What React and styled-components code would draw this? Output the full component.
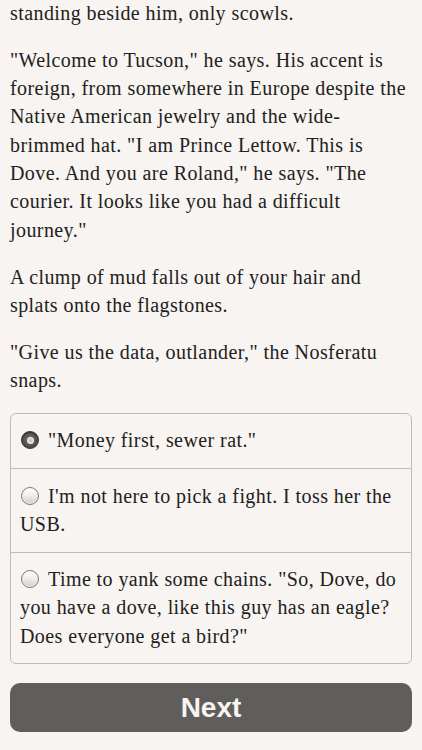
import React, { useState } from "react";
import styled, { createGlobalStyle } from "styled-components";

const GlobalStyle = createGlobalStyle`
  html, body {
    margin: 0;
    padding: 0;
    background: #f7f4f1;
  }
  * { box-sizing: border-box; }
`;

const Page = styled.main`
  padding: 0 10px;
  font-family: "Liberation Serif", "Times New Roman", serif;
  font-size: 20px;
  letter-spacing: 0.42px;
  line-height: 28.3px;
  color: #222120;
`;

const Paragraph = styled.p`
  margin: 0 0 18.6px 0;
  &:first-child {
    margin-top: -1px;
  }
`;

const Choices = styled.form`
  border: 1px solid #bebcb9;
  border-radius: 6px;
  overflow: hidden;
  margin: 0 0 19px 0;
`;

const Choice = styled.label`
  display: block;
  padding: 12.4px 9px 13.5px 9px;
  border-top: ${(p) => (p.$first ? "none" : "1px solid #bebcb9")};
  cursor: pointer;
`;

const HiddenInput = styled.input`
  position: absolute;
  opacity: 0;
  width: 0;
  height: 0;
`;

const Radio = styled.span`
  display: inline-block;
  width: 18px;
  height: 18px;
  margin: 0 9px 0 1px;
  vertical-align: -2px;
  border-radius: 50%;
  position: relative;
  border: 1px solid ${(p) => (p.$checked ? "#353433" : "#7c7a78")};
  background: ${(p) =>
    p.$checked
      ? "radial-gradient(circle at 50% 45%, #7a7977 0%, #555452 50%, #3f3e3d 100%)"
      : "linear-gradient(#ffffff 0%, #f0efee 45%, #cfcecc 100%)"};
  box-shadow: ${(p) =>
    p.$checked ? "inset 0 1px 1px rgba(0,0,0,0.4)" : "inset 0 -1px 1px rgba(255,255,255,0.7)"};

  &::after {
    content: "";
    display: ${(p) => (p.$checked ? "block" : "none")};
    position: absolute;
    left: 50%;
    top: 50%;
    width: 7px;
    height: 7px;
    margin: -3.5px 0 0 -3.5px;
    border-radius: 50%;
    background: radial-gradient(circle, #bdbcba 0%, #e9e8e6 60%, #ffffff 100%);
  }
`;

const NextButton = styled.button`
  display: block;
  width: 100%;
  height: 49px;
  border: none;
  border-radius: 10px;
  background: #5f5e5c;
  color: #f7f4f1;
  font-family: "Liberation Sans", Arial, Helvetica, sans-serif;
  font-weight: bold;
  font-size: 28px;
  letter-spacing: 0;
  line-height: 49px;
  padding: 0;
  cursor: pointer;
`;

const options = [
  '"Money first, sewer rat."',
  "I'm not here to pick a fight. I toss her the USB.",
  'Time to yank some chains. "So, Dove, do you have a dove, like this guy has an eagle? Does everyone get a bird?"',
];

export default function App() {
  const [choice, setChoice] = useState(0);
  return (
    <>
      <GlobalStyle />
      <Page>
        <Paragraph>standing beside him, only scowls.</Paragraph>
        <Paragraph>
          "Welcome to Tucson," he says. His accent is foreign, from somewhere in
          Europe despite the Native American jewelry and the wide-brimmed hat.
          "I am Prince Lettow. This is Dove. And you are Roland," he says. "The
          courier. It looks like you had a difficult journey."
        </Paragraph>
        <Paragraph>
          A clump of mud falls out of your hair and splats onto the flagstones.
        </Paragraph>
        <Paragraph>
          "Give us the data, outlander," the Nosferatu snaps.
        </Paragraph>
        <Choices onSubmit={(e) => e.preventDefault()}>
          {options.map((text, i) => (
            <Choice key={i} $first={i === 0}>
              <HiddenInput
                type="radio"
                name="choice"
                checked={choice === i}
                onChange={() => setChoice(i)}
              />
              <Radio $checked={choice === i} />
              {text}
            </Choice>
          ))}
        </Choices>
        <NextButton type="button">Next</NextButton>
      </Page>
    </>
  );
}
